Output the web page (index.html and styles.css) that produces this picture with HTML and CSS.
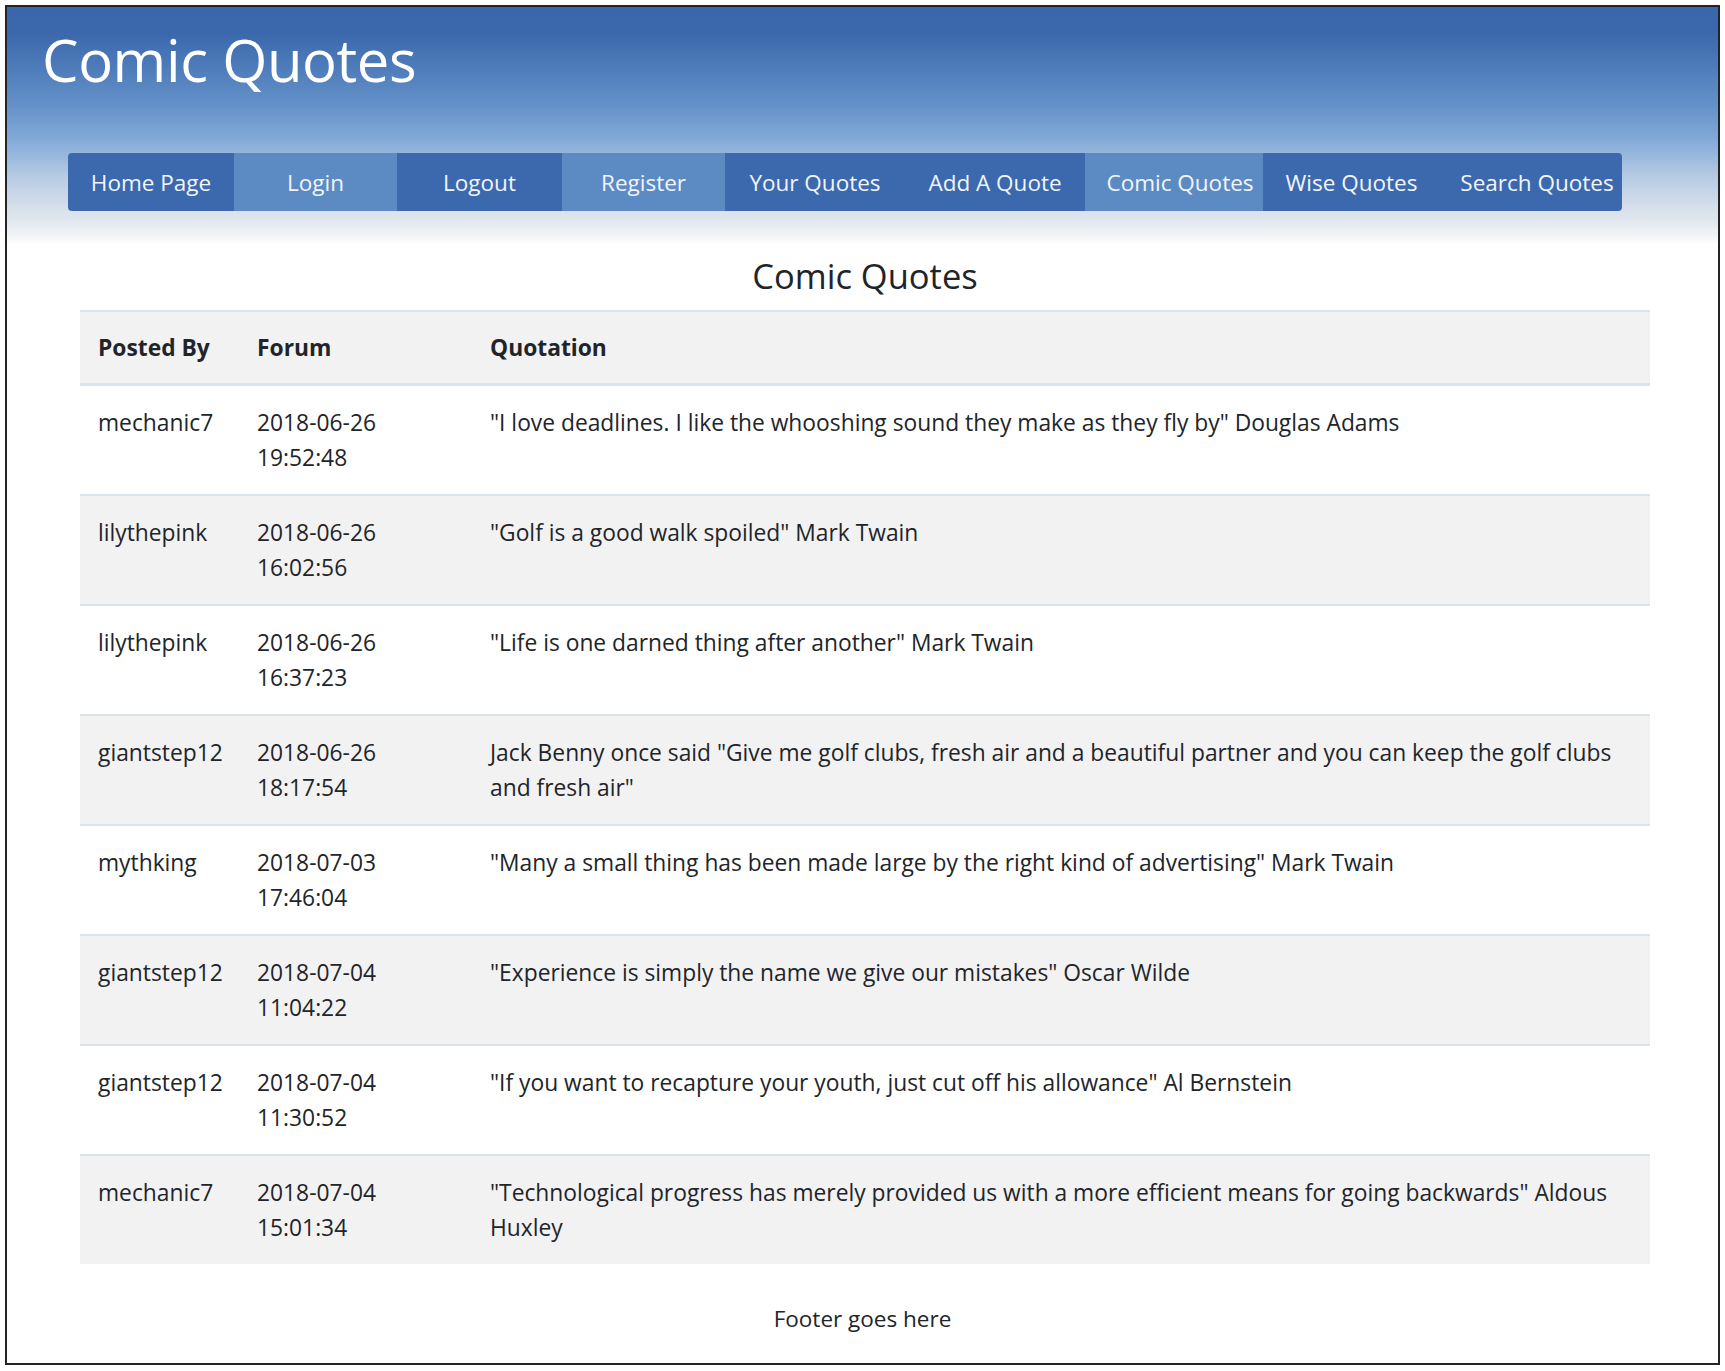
FILE: index.html
```html
<!DOCTYPE html>
<html lang="en">
<head>
<meta charset="utf-8">
<title>Comic Quotes</title>
<link rel="stylesheet" href="styles.css">
</head>
<body>
<div class="frame">
  <header class="masthead">
    <h1 class="site-title">Comic Quotes</h1>
    <nav class="nav">
      <a class="nav-item dark w166 first">Home Page</a>
      <a class="nav-item light w163">Login</a>
      <a class="nav-item dark w165">Logout</a>
      <a class="nav-item light w163">Register</a>
      <a class="nav-item dark w180">Your Quotes</a>
      <a class="nav-item dark w180">Add A Quote</a>
      <a class="nav-item light w178 shift">Comic Quotes</a>
      <a class="nav-item dark w177">Wise Quotes</a>
      <a class="nav-item dark w182 last shift">Search Quotes</a>
    </nav>
  </header>
  <main class="content">
    <h2 class="page-heading">Comic Quotes</h2>
    <table class="quotes">
      <colgroup>
        <col class="c1"><col class="c2"><col class="c3">
      </colgroup>
      <thead>
        <tr><th>Posted By</th><th>Forum</th><th>Quotation</th></tr>
      </thead>
      <tbody>
        <tr><td>mechanic7</td><td>2018-06-26<br>19:52:48</td><td>"I love deadlines. I like the whooshing sound they make as they fly by" Douglas Adams</td></tr>
        <tr><td>lilythepink</td><td>2018-06-26<br>16:02:56</td><td>"Golf is a good walk spoiled" Mark Twain</td></tr>
        <tr><td>lilythepink</td><td>2018-06-26<br>16:37:23</td><td>"Life is one darned thing after another" Mark Twain</td></tr>
        <tr><td>giantstep12</td><td>2018-06-26<br>18:17:54</td><td>Jack Benny once said "Give me golf clubs, fresh air and a beautiful partner and you can keep the golf clubs and fresh air"</td></tr>
        <tr><td>mythking</td><td>2018-07-03<br>17:46:04</td><td>"Many a small thing has been made large by the right kind of advertising" Mark Twain</td></tr>
        <tr><td>giantstep12</td><td>2018-07-04<br>11:04:22</td><td>"Experience is simply the name we give our mistakes" Oscar Wilde</td></tr>
        <tr><td>giantstep12</td><td>2018-07-04<br>11:30:52</td><td>"If you want to recapture your youth, just cut off his allowance" Al Bernstein</td></tr>
        <tr><td>mechanic7</td><td>2018-07-04<br>15:01:34</td><td>"Technological progress has merely provided us with a more efficient means for going backwards" Aldous Huxley</td></tr>
      </tbody>
    </table>
  </main>
  <footer class="footer">Footer goes here</footer>
</div>
</body>
</html>
```

FILE: styles.css
```css
html, body {
  margin: 0;
  padding: 0;
  background: #ffffff;
}
body {
  font-family: "Open Sans", "Noto Sans", "DejaVu Sans", sans-serif;
  color: #212529;
}
.frame {
  margin: 5px 5px 0 5px;
  width: 1711px;
  height: 1356px;
  border: 2px solid #242424;
  display: flex;
  flex-direction: column;
  background: #ffffff;
}
.masthead {
  height: 238px;
  display: flex;
  flex-direction: column;
  background: linear-gradient(to bottom,
    #3a66ab 0px,
    #3c69ad 28px,
    #4f7dbb 62px,
    #6592c9 100px,
    #80a8d6 130px,
    #8fb2db 142px,
    #b7cbe4 170px,
    #d6dfea 200px,
    #e2e7ee 214px,
    #f4f5f7 230px,
    #ffffff 238px);
}
.site-title {
  margin: 17px 0 0 35px;
  font-size: 58px;
  line-height: 72px;
  font-weight: 400;
  color: #ffffff;
  letter-spacing: -0.4px;
}
.nav {
  margin: 57px 0 0 61px;
  display: flex;
  height: 58px;
  width: 1554px;
}
.nav-item {
  display: flex;
  align-items: center;
  justify-content: center;
  font-size: 22.5px;
  color: #f1f5fb;
  white-space: nowrap;
  text-decoration: none;
}
.nav-item.shift { padding-left: 12px; box-sizing: border-box; }
.nav-item.dark { background: #3c69ad; }
.nav-item.light { background: #5c8bc4; }
.nav-item.first { border-radius: 4px 0 0 4px; }
.nav-item.last { border-radius: 0 4px 4px 0; }
.w166 { width: 166px; }
.w163 { width: 163px; }
.w165 { width: 165px; }
.w180 { width: 180px; }
.w178 { width: 178px; }
.w177 { width: 177px; }
.w182 { width: 182px; }

.content {
  display: flex;
  flex-direction: column;
  align-items: stretch;
  padding: 0 68px 0 73px;
}
.page-heading {
  margin: 10px 0 13px 0;
  text-align: center;
  font-size: 34.5px;
  line-height: 42px;
  font-weight: 400;
  color: #212529;
}
.quotes {
  width: 1570px;
  table-layout: fixed;
  border-collapse: separate;
  border-spacing: 0;
  font-size: 22.8px;
  line-height: 35px;
  color: #212529;
}
.c1 { width: 159px; }
.c2 { width: 233px; }
.c3 { width: 1178px; }
.quotes th {
  text-align: left;
  font-weight: 700;
  padding: 18px 18px;
  background: #f3f2f3;
  border-top: 2px solid #dde3ea;
  border-bottom: 1px solid #dde3ea;
}
.quotes td {
  vertical-align: top;
  padding: 19px 18px;
  border-top: 2px solid #dde3ea;
}
.quotes tbody tr:nth-child(even) td {
  background: #f3f2f3;
}
.footer {
  margin-top: 37px;
  text-align: center;
  font-size: 22.5px;
  line-height: 35px;
  color: #212529;
}
```
